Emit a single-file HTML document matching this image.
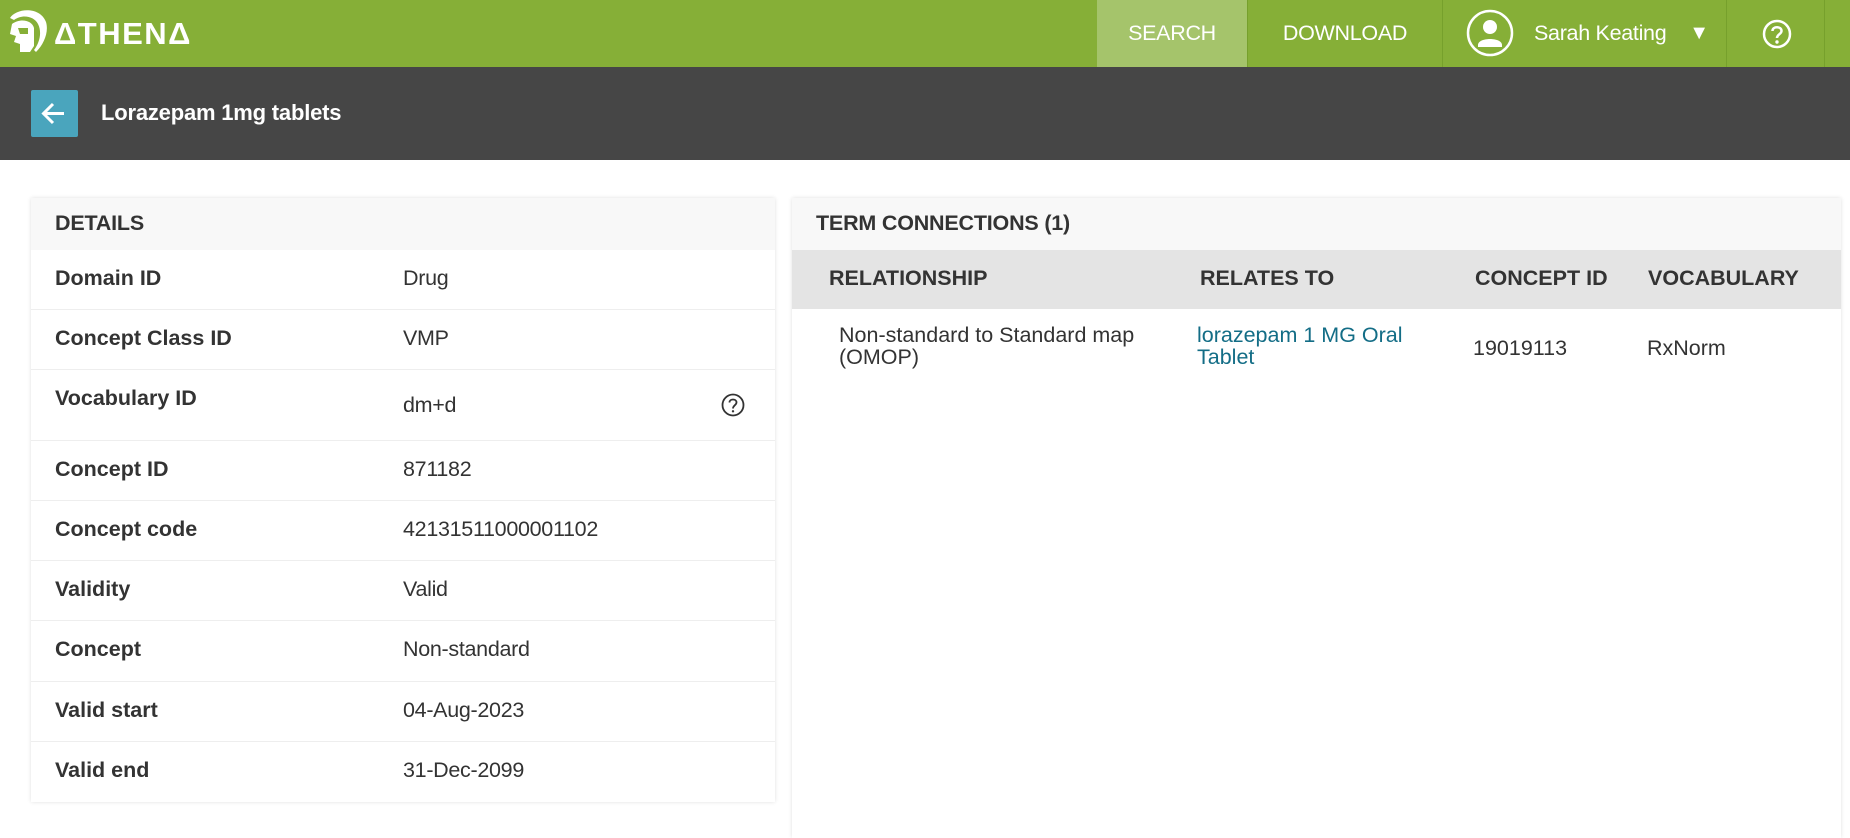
<!DOCTYPE html>
<html><head><style>
*{box-sizing:border-box;margin:0;padding:0}
body{width:1850px;height:823px;overflow:hidden;background:#fff;font-family:"Liberation Sans",Arial,sans-serif;color:#333;position:relative}
.hdr{position:absolute;left:0;top:0;width:1850px;height:67px;background:#86af37}
.nav{position:absolute;top:0;height:67px;color:#fff;font-size:21.5px;display:flex;align-items:center;justify-content:center;letter-spacing:-0.3px}
.div{position:absolute;top:0;width:1px;height:67px;background:#76a02c}
.bar{position:absolute;left:0;top:67px;width:1850px;height:93px;background:#464646}
.back{position:absolute;left:31px;top:90px;width:47px;height:47px;background:#4aa5bd;border-radius:2px}
.title{position:absolute;left:101px;top:100px;color:#fff;font-weight:bold;font-size:22px;letter-spacing:-0.2px}
.card{position:absolute;top:198px;background:#fff;box-shadow:0 0 4px rgba(0,0,0,.12)}
.ch{height:52px;background:#f8f8f8;font-weight:bold;font-size:21.5px;padding:13px 0 0 24px;color:#333;letter-spacing:-0.2px}
.row{position:absolute;left:0;width:744px;border-top:1px solid #eee;font-size:21.5px}
.row .l{position:absolute;left:24px;font-weight:bold}
.row .v{position:absolute;left:372px;letter-spacing:-0.3px}
.th{position:absolute;font-weight:bold;font-size:21.5px}
.td{position:absolute;font-size:21.5px;line-height:22px}
</style></head><body>
<div class="hdr"></div>
<svg style="position:absolute;left:6px;top:8px" width="44" height="46" viewBox="0 0 44 46"><path d="M4 10 C10 0 34 -2 40 14 C43 24 38 36 30 44 L28 42 C34 34 36 24 32 16 C28 8 16 6 8 12 Z" fill="#fff"/><path d="M6 16 C14 10 26 12 28 20 L28 38 L24 44 L14 44 L14 36 L8 34 L10 28 L4 26 Z" fill="#fff"/><path d="M12 20 L22 20 L22 26 L14 26 Z" fill="#86af37"/></svg>
<div style="position:absolute;left:54px;top:16px;color:#fff;font-weight:bold;font-size:31px;letter-spacing:1.5px">ΔTHENΔ</div>
<div class="nav" style="left:1097px;width:150px;background:#a5c46b">SEARCH</div>
<div class="div" style="left:1247px"></div>
<div class="nav" style="left:1248px;width:194px">DOWNLOAD</div>
<div class="div" style="left:1442px"></div>
<svg style="position:absolute;left:1466px;top:9px" width="48" height="48" viewBox="0 0 48 48"><circle cx="24" cy="24" r="22" fill="none" stroke="#fff" stroke-width="2.5"/><circle cx="24" cy="18" r="7" fill="#fff"/><path d="M12 36 C12 28 36 28 36 36 L36 38 L12 38Z" fill="#fff"/></svg>
<div class="nav" style="left:1534px;width:150px;justify-content:flex-start">Sarah Keating</div>
<div class="nav" style="left:1688px;width:22px;font-size:20px">▼</div>
<div class="div" style="left:1726px"></div>
<svg style="position:absolute;left:1762px;top:19px" width="30" height="30" viewBox="0 0 30 30"><circle cx="15" cy="15" r="13" fill="none" stroke="#fff" stroke-width="2.5"/><path d="M10.5 12 C10.5 7 19.5 7 19.5 12 C19.5 15 15 15.5 15 19" fill="none" stroke="#fff" stroke-width="2.5"/><circle cx="15" cy="23" r="1.7" fill="#fff"/></svg>
<div class="div" style="left:1824px"></div>
<div class="bar"></div>
<div class="back"><svg width="47" height="47" viewBox="0 0 47 47"><path d="M33 23.5 H13 M22 14 L12.5 23.5 L22 33" fill="none" stroke="#fff" stroke-width="3"/></svg></div>
<div class="title">Lorazepam 1mg tablets</div>

<div class="card" style="left:31px;width:744px;height:604px">
<div class="ch">DETAILS</div>
<div class="row" style="top:52px;height:59px;border-top:none"><span class="l" style="top:16px">Domain ID</span><span class="v" style="top:16px">Drug</span></div>
<div class="row" style="top:111px;height:60px"><span class="l" style="top:16px">Concept Class ID</span><span class="v" style="top:16px">VMP</span></div>
<div class="row" style="top:171px;height:71px"><span class="l" style="top:16px">Vocabulary ID</span><span class="v" style="top:23px">dm+d</span>
<svg style="position:absolute;left:690px;top:23px" width="24" height="24" viewBox="0 0 24 24"><circle cx="12" cy="12" r="10.5" fill="none" stroke="#333" stroke-width="1.8"/><path d="M8.5 9.5 C8.5 5.5 15.5 5.5 15.5 9.5 C15.5 12 12 12.5 12 15.5" fill="none" stroke="#333" stroke-width="1.8"/><circle cx="12" cy="18.3" r="1.2" fill="#333"/></svg></div>
<div class="row" style="top:242px;height:60px"><span class="l" style="top:16px">Concept ID</span><span class="v" style="top:16px">871182</span></div>
<div class="row" style="top:302px;height:60px"><span class="l" style="top:16px">Concept code</span><span class="v" style="top:16px">42131511000001102</span></div>
<div class="row" style="top:362px;height:60px"><span class="l" style="top:16px">Validity</span><span class="v" style="top:16px">Valid</span></div>
<div class="row" style="top:422px;height:61px"><span class="l" style="top:16px">Concept</span><span class="v" style="top:16px">Non-standard</span></div>
<div class="row" style="top:483px;height:60px"><span class="l" style="top:16px">Valid start</span><span class="v" style="top:16px">04-Aug-2023</span></div>
<div class="row" style="top:543px;height:61px"><span class="l" style="top:16px">Valid end</span><span class="v" style="top:16px">31-Dec-2099</span></div>
</div>

<div class="card" style="left:792px;width:1049px;height:640px">
<div class="ch">TERM CONNECTIONS (1)</div>
<div style="height:59px;background:#e4e4e4"></div>
</div>
<div class="th" style="left:829px;top:266px">RELATIONSHIP</div>
<div class="th" style="left:1200px;top:266px">RELATES TO</div>
<div class="th" style="left:1475px;top:266px">CONCEPT ID</div>
<div class="th" style="left:1648px;top:266px">VOCABULARY</div>
<div class="td" style="left:839px;top:324px">Non-standard to Standard map<br>(OMOP)</div>
<div class="td" style="left:1197px;top:324px;color:#136d86">lorazepam 1 MG Oral<br>Tablet</div>
<div class="td" style="left:1473px;top:337px">19019113</div>
<div class="td" style="left:1647px;top:337px">RxNorm</div>
</body></html>
